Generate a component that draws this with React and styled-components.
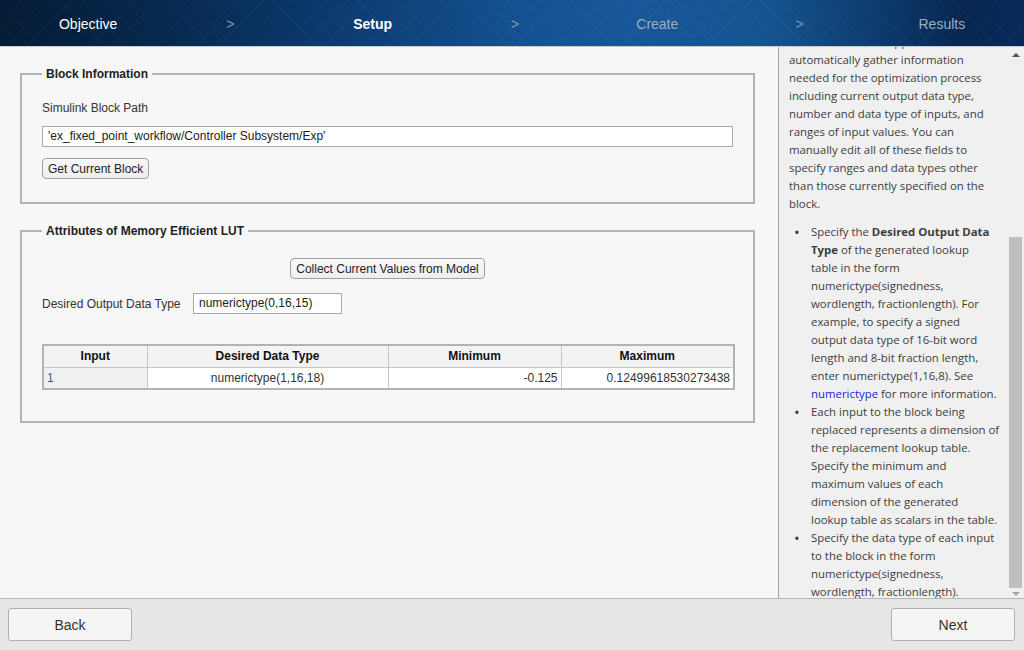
import React, { useEffect, useRef } from 'react'
import styled, { createGlobalStyle } from 'styled-components'

const GlobalStyle = createGlobalStyle`
  html, body {
    margin: 0;
    padding: 0;
    width: 1024px;
    height: 650px;
    overflow: hidden;
    font-family: "Liberation Sans", Arial, sans-serif;
    background: #f7f7f7;
  }
  * { box-sizing: border-box; }
`

const steps = [
  { label: 'Objective', state: 'done' },
  { label: '>', state: 'sep' },
  { label: 'Setup', state: 'active' },
  { label: '>', state: 'sep' },
  { label: 'Create', state: 'todo' },
  { label: '>', state: 'sep' },
  { label: 'Results', state: 'todo' },
]

const App = () => {
  const scrollRef = useRef(null)
  const anchorRef = useRef(null)

  useEffect(() => {
    // help panel is scrolled so the "automatically ..." line sits at the top
    if (scrollRef.current && anchorRef.current) {
      scrollRef.current.scrollTop = anchorRef.current.offsetTop + 36 - 4
    }
  }, [])

  return (
    <Page>
      <GlobalStyle />
      <Header>
        {steps.map((s, i) => (
          <Step key={i} $state={s.state}>{s.label}</Step>
        ))}
      </Header>

      <Main>
        <Left>
          <Group>
            <Legend>Block Information</Legend>
            <Stack>
              <Label>Simulink Block Path</Label>
              <TextBox $wide>'ex_fixed_point_workflow/Controller Subsystem/Exp'</TextBox>
              <Row>
                <SmallButton>Get Current Block</SmallButton>
              </Row>
            </Stack>
          </Group>

          <Group $second>
            <Legend>Attributes of Memory Efficient LUT</Legend>
            <Stack $gap={14}>
              <Centered>
                <SmallButton>Collect Current Values from Model</SmallButton>
              </Centered>
              <Row>
                <Label $fixed>Desired Output Data Type</Label>
                <TextBox>numerictype(0,16,15)</TextBox>
              </Row>
              <Table>
                <colgroup>
                  <col style={{ width: 104 }} />
                  <col style={{ width: 241 }} />
                  <col style={{ width: 173 }} />
                  <col style={{ width: 173 }} />
                </colgroup>
                <thead>
                  <tr>
                    <Th>Input</Th>
                    <Th>Desired Data Type</Th>
                    <Th>Minimum</Th>
                    <Th>Maximum</Th>
                  </tr>
                </thead>
                <tbody>
                  <tr>
                    <Td $kind="key">1</Td>
                    <Td $align="center">numerictype(1,16,18)</Td>
                    <Td $align="right">-0.125</Td>
                    <Td $align="right">0.12499618530273438</Td>
                  </tr>
                </tbody>
              </Table>
            </Stack>
          </Group>
        </Left>

        <Help>
          <HelpScroll ref={scrollRef}>
            <HelpBody>
              <Para>
                Specify the block you want to<br />
                replace with a lookup table in the<br />
                Simulink Block Path field, or select<br />
                the block in the model and click<br />
                Get Current Block.
              </Para>
              <Para ref={anchorRef}>
                Click Collect Current Values from<br />
                Model to have the app<br />
                automatically gather information<br />
                needed for the optimization process<br />
                including current output data type,<br />
                number and data type of inputs, and<br />
                ranges of input values. You can<br />
                manually edit all of these fields to<br />
                specify ranges and data types other<br />
                than those currently specified on the<br />
                block.
              </Para>
              <List>
                <Item>
                  <Bullet>•</Bullet>
                  <span>
                    Specify the <b>Desired Output Data</b><br />
                    <b>Type</b> of the generated lookup<br />
                    table in the form<br />
                    numerictype(signedness,<br />
                    wordlength, fractionlength). For<br />
                    example, to specify a signed<br />
                    output data type of 16-bit word<br />
                    length and 8-bit fraction length,<br />
                    enter numerictype(1,16,8). See<br />
                    <Link>numerictype</Link> for more information.
                  </span>
                </Item>
                <Item>
                  <Bullet>•</Bullet>
                  <span>
                    Each input to the block being<br />
                    replaced represents a dimension of<br />
                    the replacement lookup table.<br />
                    Specify the minimum and<br />
                    maximum values of each<br />
                    dimension of the generated<br />
                    lookup table as scalars in the table.
                  </span>
                </Item>
                <Item>
                  <Bullet>•</Bullet>
                  <span>
                    Specify the data type of each input<br />
                    to the block in the form<br />
                    numerictype(signedness,<br />
                    wordlength, fractionlength).
                  </span>
                </Item>
              </List>
            </HelpBody>
          </HelpScroll>
          <ScrollTrack>
            <ArrowUp />
            <Thumb />
            <ArrowDown />
          </ScrollTrack>
        </Help>
      </Main>

      <Footer>
        <NavButton>Back</NavButton>
        <NavButton>Next</NavButton>
      </Footer>
    </Page>
  )
}

export default App

const Page = styled.div`
width: 1024px;
height: 650px;
display: flex;
flex-direction: column;
`

const Header = styled.div`
height: 47px;
flex: none;
display: grid;
grid-template-columns: repeat(7, 1fr);
align-items: center;
padding: 2px 11px 0 17px;
border-bottom: 1px solid #c9c9c9;
background:
  repeating-linear-gradient(45deg, rgba(255,255,255,0.0) 0px, rgba(255,255,255,0.0) 14px, rgba(255,255,255,0.05) 15px),
  repeating-linear-gradient(-45deg, rgba(255,255,255,0.0) 0px, rgba(255,255,255,0.0) 14px, rgba(255,255,255,0.05) 15px),
  linear-gradient(90deg, #041b34 0%, #072a52 18%, #0c3d73 35%, #14508f 50%, #175799 62%, #15538f 75%, #0c3a6c 86%, #062650 94%, #07295a 100%);
`

const Step = styled.div`
text-align: center;
font-size: 14px;
font-weight: ${p => (p.$state === 'active' ? 'bold' : 'normal')};
color: ${p =>
  p.$state === 'sep' ? '#8797ad' : p.$state === 'todo' ? '#9eacbd' : '#ffffff'};
`

const Main = styled.div`
flex: 1;
display: flex;
min-height: 0;
`

const Left = styled.div`
width: 779px;
flex: none;
padding: 20px 23px 0 20px;
background: #f7f7f7;
border-right: 1px solid #a6a6a6;
`

const Group = styled.fieldset`
margin: ${p => (p.$second ? '20px 0 0 0' : '0')};
padding: 0 20px ${p => (p.$second ? '31px' : '23px')} 20px;
border: 2px solid #b3b3b3;
min-width: 0;
`

const Legend = styled.legend`
padding: 0 4px;
font-size: 12px;
line-height: 14px;
font-weight: bold;
color: #222;
`

const Stack = styled.div`
display: flex;
flex-direction: column;
gap: ${p => p.$gap || 11}px;
padding-top: 20px;
`

const Row = styled.div`
display: flex;
align-items: center;
`

const Centered = styled.div`
display: flex;
justify-content: center;
`

const Label = styled.div`
font-size: 12px;
line-height: 14px;
color: #333;
width: ${p => (p.$fixed ? '151px' : 'auto')};
flex: none;
`

const TextBox = styled.div`
height: 21px;
width: ${p => (p.$wide ? '691px' : '149px')};
border: 1px solid #a9a9a9;
background: #fff;
font-size: 12px;
line-height: 19px;
padding: 0 5px;
color: #222;
white-space: nowrap;
`

const SmallButton = styled.button`
height: 21px;
padding: 0 5px;
border: 1px solid #a0a0a0;
border-radius: 4px;
background: linear-gradient(#f8f8f8, #eeeeee);
font-family: "Liberation Sans", Arial, sans-serif;
font-size: 12px;
color: #222;
cursor: pointer;
`

const Table = styled.table`
margin-top: 16px;
width: 691px;
border-collapse: collapse;
table-layout: fixed;
border: 2px solid #b3b3b3;
font-size: 12px;
`

const Th = styled.th`
height: 22px;
padding: 0 4px;
background: #f3f3f3;
border: 1px solid #c6c6c6;
font-weight: bold;
color: #111;
text-align: center;
`

const Td = styled.td`
height: 22px;
padding: 0 3px;
border: 1px solid #c6c6c6;
background: ${p => (p.$kind === 'key' ? '#f0f0f0' : '#ffffff')};
color: ${p => (p.$kind === 'key' ? '#3f5b82' : '#333')};
text-align: ${p => p.$align || 'left'};
`

const Help = styled.div`
flex: 1;
position: relative;
background: #f0f0f0;
min-width: 0;
`

const HelpScroll = styled.div`
position: relative;
height: 100%;
overflow: hidden;
`

const HelpBody = styled.div`
padding: 10px 16px 40px 10px;
font-family: "Open Sans", "Noto Sans", sans-serif;
font-size: 11.4px;
line-height: 18px;
color: #3d3d3d;
white-space: nowrap;
`

const Para = styled.p`
margin: 0 0 10px 0;
`

const List = styled.ul`
margin: 0;
padding: 0;
list-style: none;
`

const Item = styled.li`
display: grid;
grid-template-columns: 22px 1fr;
`

const Bullet = styled.span`
padding-left: 5px;
font-size: 15px;
line-height: 18px;
`

const Link = styled.span`
color: #1a1aee;
`

const ScrollTrack = styled.div`
position: absolute;
top: 0;
right: 2px;
bottom: 0;
width: 13px;
display: flex;
flex-direction: column;
align-items: center;
padding: 6px 0 2px 0;
`

const ArrowUp = styled.div`
width: 0;
height: 0;
border-left: 4px solid transparent;
border-right: 4px solid transparent;
border-bottom: 4px solid #505050;
margin-bottom: 8px;
`

const Thumb = styled.div`
width: 13px;
margin-top: auto;
height: 351px;
background: #bfbfbf;
`

const ArrowDown = styled.div`
width: 0;
height: 0;
border-left: 4px solid transparent;
border-right: 4px solid transparent;
border-top: 4px solid #a3a3a3;
margin-top: 4px;
margin-bottom: 0;
`

const Footer = styled.div`
height: 52px;
flex: none;
display: flex;
justify-content: space-between;
align-items: center;
padding: 0 9px 0 8px;
background: #e6e6e6;
border-top: 1px solid #b7b7b7;
`

const NavButton = styled.button`
width: 124px;
height: 33px;
border: 1px solid #b0b0b0;
border-radius: 3px;
background: #f5f5f5;
font-family: "Liberation Sans", Arial, sans-serif;
font-size: 14px;
color: #333;
cursor: pointer;
`
